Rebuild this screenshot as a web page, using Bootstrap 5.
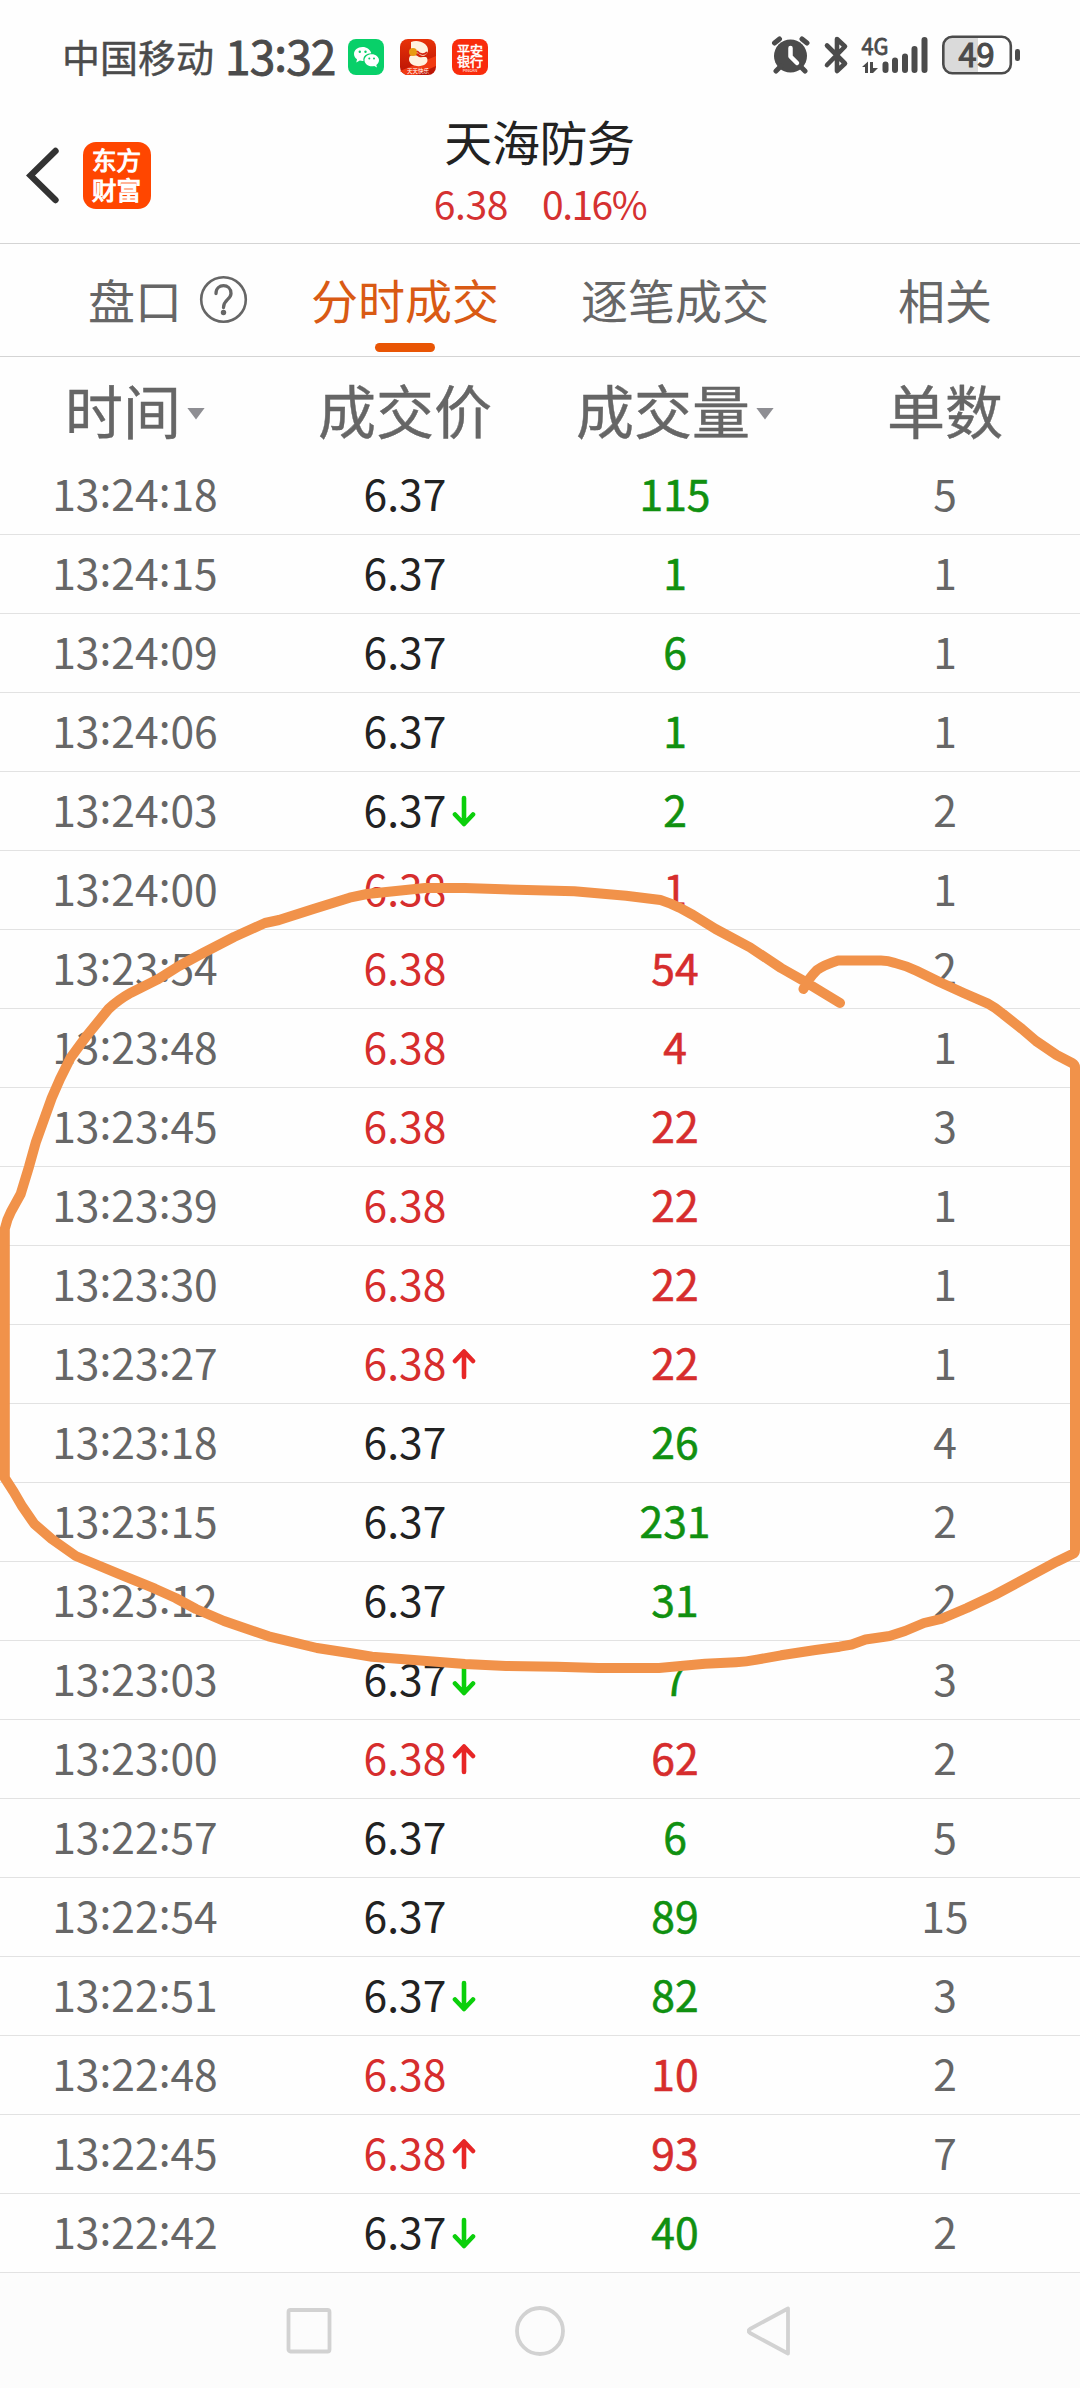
<!DOCTYPE html>
<html lang="zh-CN">
<head>
<meta charset="utf-8">
<meta name="viewport" content="width=device-width, initial-scale=1">
<title>天海防务 分时成交</title>
<link rel="stylesheet" href="https://cdn.jsdelivr.net/npm/bootstrap@5.3.0/dist/css/bootstrap.min.css">
<style>
  body { font-family: "Noto Sans CJK SC", "Noto Sans", sans-serif; color: #666; background: #fefefe; overflow-x: hidden; }
  svg { display: block; flex: none; }
  .screen { width: 1080px; height: 2388px; overflow: hidden; }
  .status { height: 108px; padding: 2px 59px 0 62px; color: #4b4b4b; }
  .carrier { font-size: 38px; line-height: 107px; -webkit-text-stroke: .4px; }
  .clock { font-size: 46px; line-height: 107px; letter-spacing: -.9px; margin-left: 11px; width: 123px; white-space: nowrap; -webkit-text-stroke: .9px; }
  .clock i, .tick i { font-style: normal; position: relative; top: -4px; }
  .apps { gap: 16px; }
  .titlebar { height: 136px; border-bottom: 1px solid #d4d4d4; }
  .lead-icons { width: 270px; padding: 34px 0 0 26px; gap: 24px; }
  .stock-name { font-size: 48px; line-height: 65px; color: #222; letter-spacing: -.4px; margin-left: -1px; }
  .quote { font-size: 39px; line-height: 60px; color: #d53131; gap: 34px; letter-spacing: -.4px; }
  .quote .pct { letter-spacing: -1.5px; }
  .tabs { height: 113px; border-bottom: 1px solid #d4d4d4; font-size: 47px; line-height: 109px; }
  .tabs .active-tab { color: #d95a14; }
  .tabs .active-tab::after { content: ""; position: absolute; left: 50%; margin-left: -30px; bottom: 4px; width: 60px; height: 9px; border-radius: 5px; background: #e95504; }
  .help { position: absolute; left: 199px; top: 31px; }
  .heads { height: 99px; font-size: 58px; line-height: 104px; -webkit-text-stroke: .4px; }
  .caret { width: 18px; height: 12px; background: #8e8e93; clip-path: polygon(0 0, 100% 0, 50% 100%); margin: 9px 0 0 6px; }
  .tick { height: 79px; border-bottom: 1px solid #e2e2e2; font-size: 42.6px; line-height: 74px; }
  .vol { -webkit-text-stroke: .6px; }
  .flat { color: #222; }
  .rise { color: #d62d2d; }
  .fall { color: #109010; }
  .arrow { position: absolute; left: calc(100% + 6px); top: 23px; }
  .navkeys { height: 115px; background: #fcfcfc; padding: 0 0 0 285px; gap: 182px; }
  .scribble { position: absolute; left: 0; top: 0; pointer-events: none; }
</style>
</head>
<body>
<main class="screen position-relative">

  <header class="status d-flex align-items-center justify-content-between">
    <div class="d-flex align-items-center">
      <span class="carrier">中国移动</span>
      <span class="clock">13<i>:</i>32</span>
      <div class="apps d-flex pt-1">
        <svg width="36" height="36" viewBox="0 0 36 36">
          <rect width="36" height="36" rx="8" fill="#08d069"/>
          <path fill="#fff" d="M14.500 8C9.600 8 6 11.200 6 15c0 2.200 1.200 4 3 5.300L8.300 23.500 11.800 21.600c1.200.3 2.500.4 3.700.3C14.500 17 19 14.200 23.300 14.300 22.400 10.500 18.800 8 14.500 8z"/>
          <path fill="#fff" d="M23.700 15.300c-4 0-7.200 2.700-7.200 6s3.200 6 7.200 6c.9 0 1.800-.1 2.500-.4l2.800 1.500-.7-2.500c1.700-1.100 2.700-2.700 2.700-4.600 0-3.300-3.300-6-7.300-6z"/>
          <g fill="#08d069"><circle cx="11.800" cy="12.800" r="1.200"/><circle cx="17.500" cy="12.800" r="1.200"/><circle cx="21.300" cy="19.500" r="1"/><circle cx="26" cy="19.500" r="1"/></g>
        </svg>
        <svg width="36" height="36" viewBox="0 0 36 36">
          <defs><linearGradient id="app-red" x2="0" y2="1"><stop stop-color="#e83208"/><stop offset="1" stop-color="#b81205"/></linearGradient></defs>
          <rect width="36" height="36" rx="8" fill="url(#app-red)"/>
          <path d="M0 32 36 17v10L16 36H6z" fill="#f13a12"/>
          <path d="M11 3c7-3 17 1 17 8 0 5-5 7-8 5-3-4-8 0-9-5z" fill="#fff2df"/>
          <path d="M10 17c3-2 7-1 9 1 3 1 7-1 8 1 3 7-8 10-14 7-4-2-5-6-3-9z" fill="#fff2df"/>
          <circle cx="13" cy="13" r="4" fill="#e89b12"/>
          <path d="M17 12c3 4 8 4 10 1" fill="none" stroke="#d52712" stroke-width="1.800"/>
          <text x="18" y="34" text-anchor="middle" font-size="5.500" fill="#fff">天天快乐</text>
        </svg>
        <svg width="36" height="36" viewBox="0 0 36 36">
          <rect width="36" height="36" rx="8" fill="#f92c0c"/>
          <g fill="#fff" text-anchor="middle"><g stroke="#fff" stroke-width=".5"><text x="18" y="15.600" font-size="13">平安</text><text x="18" y="27" font-size="13">银行</text></g><text x="18" y="32.500" font-size="4">PINGAN</text></g>
        </svg>
      </div>
    </div>
    <svg width="250" height="64" viewBox="772 25 250 64" fill="#4b4b4b">
      <circle cx="791.500" cy="58" r="16.500"/>
      <g stroke="#4b4b4b" stroke-width="5" stroke-linecap="round"><path d="M775.500 45l5-4M808 45l-5-4M782 68l-5 5M801 68l5 5"/></g>
      <path d="M791.500 50v8.500l6.500 6.500" fill="none" stroke="#fff" stroke-width="4.500" stroke-linecap="round" stroke-linejoin="round"/>
      <path d="M828 47.500 846 65.500 838 73V41l8 7.500L828 67" fill="none" stroke="#4b4b4b" stroke-width="4.600" stroke-linecap="round" stroke-linejoin="round"/>
      <text x="862.500" y="57.200" font-size="23.500" textLength="27" lengthAdjust="spacingAndGlyphs" stroke="#4b4b4b" stroke-width=".8">4G</text>
      <path d="M863 69l6-5.500V75h-3v-6zM871 64h3v6h5l-5 5h-3z"/>
      <g stroke="#4b4b4b" stroke-width="6" stroke-linecap="round"><path d="M886.500 66.500V72M896 62.500V72M906 58.500V72M915.500 51V72M925.500 42V72"/></g>
      <path d="M953 39h26v36h-26a8 8 0 0 1-8-8V47a8 8 0 0 1 8-8z" fill="#dadada"/>
      <rect x="944.300" y="38.700" width="67.500" height="36.600" rx="9" fill="none" stroke="#4b4b4b" stroke-width="2.600"/>
      <rect x="1016" y="51" width="5" height="12" rx="2.300"/>
      <text x="977.500" y="69" font-size="32.500" text-anchor="middle" stroke="#4b4b4b" stroke-width="1.200">49</text>
    </svg>
  </header>

  <section class="titlebar d-flex">
    <div class="lead-icons d-flex align-items-start">
      <svg width="33" height="67" viewBox="0 0 33 67"><path d="M29.500 9 4.500 33.500 29.500 58" fill="none" stroke="#333" stroke-width="6.400" stroke-linecap="round"/></svg>
      <svg width="68" height="67" viewBox="0 0 68 67">
        <rect width="68" height="67" rx="13" fill="#ff4600"/>
        <g fill="#fff" stroke="#fff" stroke-width="1.100" text-anchor="middle" font-size="24.500"><text x="33.500" y="28">东方</text><text x="33.500" y="57.500">财富</text></g>
      </svg>
    </div>
    <div class="w-50 text-center">
      <div class="stock-name">天海防务</div>
      <div class="quote d-flex justify-content-center"><span>6.38</span><span class="pct">0.16%</span></div>
    </div>
  </section>

  <nav class="tabs row g-0 text-center">
    <div class="col-3 position-relative">盘口
      <svg class="help" width="49" height="49" viewBox="0 0 49 49" fill="none" stroke="#666">
        <circle cx="24.500" cy="24.500" r="22.300" stroke-width="2.600"/>
        <path d="M17 18.500c0-10.500 15-10.500 15 0 0 6-7.500 6-7.500 14" stroke-width="3.300" stroke-linecap="round"/>
        <circle cx="24.500" cy="37.500" r="2.700" fill="#666" stroke="none"/>
      </svg>
    </div>
    <div class="col-3 position-relative active-tab">分时成交</div>
    <div class="col-3">逐笔成交</div>
    <div class="col-3">相关</div>
  </nav>

  <div class="heads row g-0">
    <div class="col-3 d-flex justify-content-center align-items-center">时间<span class="caret"></span></div>
    <div class="col-3 text-center">成交价</div>
    <div class="col-3 d-flex justify-content-center align-items-center">成交量<span class="caret"></span></div>
    <div class="col-3 text-center">单数</div>
  </div>

  <div id="ticks"></div>

  <footer class="navkeys d-flex align-items-center">
    <svg width="48" height="50" viewBox="0 0 48 50" fill="none" stroke="#d2d2d2" stroke-width="3.800"><rect x="3.500" y="4" width="41" height="41.500" rx="2"/></svg>
    <svg width="50" height="50" viewBox="0 0 50 50" fill="none" stroke="#d2d2d2" stroke-width="3.800"><circle cx="25" cy="25" r="23"/></svg>
    <svg width="45" height="52" viewBox="0 0 45 52" fill="none" stroke="#d2d2d2" stroke-width="3.800" stroke-linejoin="round"><path d="M41 3.500v45L3 28q-3-2 0-4z"/></svg>
  </footer>

  <svg class="scribble" width="1080" height="2388" viewBox="0 0 1080 2388" fill="none" stroke="#f1924a" stroke-width="10" stroke-linecap="round" stroke-linejoin="round">
    <path d="M803.500 989Q808 979 817 970Q824 965 838 960.500H881Q888 960.500 895 963Q907 966 917 971L939.500 982L963.600 993L988 1003.700Q996 1008 1003 1014L1022 1029L1036 1041L1056.600 1055L1072 1063Q1075 1065 1075 1067V1550Q1075 1553 1073 1553.700L1056.600 1561.700L1032.500 1574.700L994.600 1595L967 1608L941 1619L924 1623L905 1631L889.600 1636L865.500 1639.500L851.700 1644.500L839.600 1646.700L815.500 1650L781 1655.300L757 1659.700Q746 1662 736 1662.300L705 1663.700L659 1668H598.500L557 1666.700L506 1666L465 1664L372 1656.700L351 1653.300L317 1648L268.600 1636.300L224 1621L196 1609L175.600 1598L155 1588.700L120.500 1574.700L75.800 1556L51.700 1539L34.400 1524L22.400 1506.700L13.800 1492L4.800 1478V1229Q7 1219 11 1211.700L20.700 1194L29 1166.700L36 1141.700L51.700 1098L60 1079L70.600 1057.700L86 1036.700L108.500 1009Q118 1000 131 992.700L158.400 979L179 966L203 953L234 937L265 923L279 920L313.400 909L349.600 897.700L367 894L396 891L425 888H465L527 890L574.400 891.300L626 895.700L660.500 900Q670 903 679.500 907.700L693 915L715.600 929L750 947.300L781 968L805 981.700L840 1003"/>
  </svg>
</main>

<script src="https://cdn.jsdelivr.net/npm/bootstrap@5.3.0/dist/js/bootstrap.bundle.min.js"></script>
<script>
  // time, price, price colour, price arrow, volume, volume colour, order count
  const ticks = [
    ['13:24:18', '6.37', 'flat', '',     115, 'fall', 5],
    ['13:24:15', '6.37', 'flat', '',     1,   'fall', 1],
    ['13:24:09', '6.37', 'flat', '',     6,   'fall', 1],
    ['13:24:06', '6.37', 'flat', '',     1,   'fall', 1],
    ['13:24:03', '6.37', 'flat', 'down', 2,   'fall', 2],
    ['13:24:00', '6.38', 'rise', '',     1,   'rise', 1],
    ['13:23:54', '6.38', 'rise', '',     54,  'rise', 2],
    ['13:23:48', '6.38', 'rise', '',     4,   'rise', 1],
    ['13:23:45', '6.38', 'rise', '',     22,  'rise', 3],
    ['13:23:39', '6.38', 'rise', '',     22,  'rise', 1],
    ['13:23:30', '6.38', 'rise', '',     22,  'rise', 1],
    ['13:23:27', '6.38', 'rise', 'up',   22,  'rise', 1],
    ['13:23:18', '6.37', 'flat', '',     26,  'fall', 4],
    ['13:23:15', '6.37', 'flat', '',     231, 'fall', 2],
    ['13:23:12', '6.37', 'flat', '',     31,  'fall', 2],
    ['13:23:03', '6.37', 'flat', 'down', 7,   'fall', 3],
    ['13:23:00', '6.38', 'rise', 'up',   62,  'rise', 2],
    ['13:22:57', '6.37', 'flat', '',     6,   'fall', 5],
    ['13:22:54', '6.37', 'flat', '',     89,  'fall', 15],
    ['13:22:51', '6.37', 'flat', 'down', 82,  'fall', 3],
    ['13:22:48', '6.38', 'rise', '',     10,  'rise', 2],
    ['13:22:45', '6.38', 'rise', 'up',   93,  'rise', 7],
    ['13:22:42', '6.37', 'flat', 'down', 40,  'fall', 2]
  ];
  const arrows = {
    '': '',
    up: '<svg class="arrow" width="24" height="33" viewBox="0 0 24 33" fill="none" stroke="#e72626" stroke-width="4.600" stroke-linecap="round" stroke-linejoin="round"><path d="M12 29V4M3 13l9-9.500 9 9.500"/></svg>',
    down: '<svg class="arrow" width="24" height="33" viewBox="0 0 24 33" fill="none" stroke="#0bcf0b" stroke-width="4.600" stroke-linecap="round" stroke-linejoin="round"><path d="M12 3v26M3 19.500l9 9.500 9-9.500"/></svg>'
  };
  document.getElementById('ticks').innerHTML = ticks.map(([t, p, pc, dir, v, vc, n]) => `
    <div class="tick row g-0 text-center">
      <div class="col-3">${t.replace(/:/g, '<i>:</i>')}</div>
      <div class="col-3 ${pc}"><span class="position-relative d-inline-block">${p}${arrows[dir]}</span></div>
      <div class="col-3 vol ${vc}">${v}</div>
      <div class="col-3">${n}</div>
    </div>`).join('');
</script>
</body>
</html>
